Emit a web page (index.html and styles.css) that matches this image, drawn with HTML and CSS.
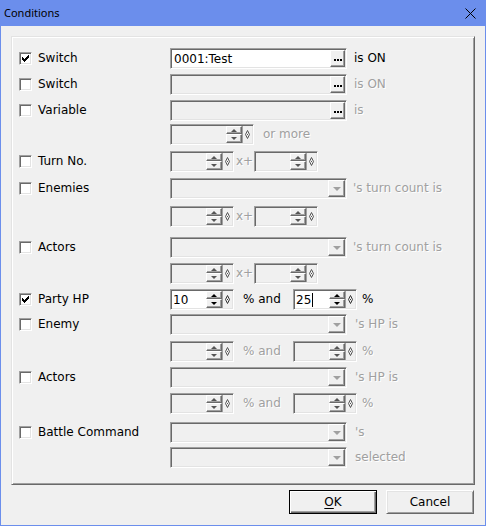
FILE: index.html
```html
<!DOCTYPE html>
<html>
<head>
<meta charset="utf-8">
<title>Conditions</title>
<link rel="stylesheet" href="styles.css">
</head>
<body>
<div class="window">
  <div class="titlebar">
    <span class="title">Conditions</span>
    <svg class="close" width="11" height="11" viewBox="0 0 11 11"><path d="M0.5 0.5 L10.5 10.5 M10.5 0.5 L0.5 10.5" stroke="#000" stroke-width="1" fill="none"/></svg>
  </div>
  <div class="client">
    <div class="group">

      <div class="row">
        <div class="cond"><span class="check"><svg width="7" height="7" viewBox="0 0 7 7"><path d="M6 0h1v1h-1z M5 1h2v1h-2z M0 2h1v1h-1z M4 2h3v1h-3z M0 3h2v1h-2z M3 3h3v1h-3z M0 4h5v1h-5z M1 5h3v1h-3z M2 6h1v1h-1z" fill="#000"/></svg></span><span class="lbl">Switch</span></div>
        <div class="ctrls">
          <div class="field on"><span class="value">0001:Test</span><span class="dots"><svg width="8" height="2" viewBox="0 0 8 2"><path d="M0 0h2v2h-2z M3 0h2v2h-2z M6 0h2v2h-2z" fill="#000"/></svg></span></div>
          <span class="txt">is ON</span>
        </div>
      </div>

      <div class="row mt5">
        <div class="cond"><span class="check"></span><span class="lbl">Switch</span></div>
        <div class="ctrls">
          <div class="field"><span class="value"></span><span class="dots"><svg width="8" height="2" viewBox="0 0 8 2"><path d="M0 0h2v2h-2z M3 0h2v2h-2z M6 0h2v2h-2z" fill="#000"/></svg></span></div>
          <span class="txt dis">is ON</span>
        </div>
      </div>

      <div class="row mt5">
        <div class="cond"><span class="check"></span><span class="lbl">Variable</span></div>
        <div class="ctrls">
          <div class="field"><span class="value"></span><span class="dots"><svg width="8" height="2" viewBox="0 0 8 2"><path d="M0 0h2v2h-2z M3 0h2v2h-2z M6 0h2v2h-2z" fill="#000"/></svg></span></div>
          <span class="txt dis">is</span>
        </div>
      </div>

      <div class="row mt3">
        <div class="cond"></div>
        <div class="ctrls">
          <div class="spin wide"><span class="value"></span><span class="ud"><span class="up"><i class="tri-up"></i></span><span class="dn"><i class="tri-dn"></i></span></span><span class="dia"><svg width="5" height="9" viewBox="0 0 5 9"><path d="M2.5 0.5 L4.5 4.5 L2.5 8.5 L0.5 4.5 Z" fill="none" stroke="#555" stroke-width="1"/><path d="M2 4h1v1h-1z" fill="#555"/></svg></span></div>
          <span class="txt dis more">or more</span>
        </div>
      </div>

      <div class="row mt6">
        <div class="cond"><span class="check"></span><span class="lbl">Turn No.</span></div>
        <div class="ctrls">
          <div class="spin"><span class="value"></span><span class="ud"><span class="up"><i class="tri-up"></i></span><span class="dn"><i class="tri-dn"></i></span></span><span class="dia"><svg width="5" height="9" viewBox="0 0 5 9"><path d="M2.5 0.5 L4.5 4.5 L2.5 8.5 L0.5 4.5 Z" fill="none" stroke="#555" stroke-width="1"/><path d="M2 4h1v1h-1z" fill="#555"/></svg></span></div>
          <span class="txt dis xplus">x+</span>
          <div class="spin"><span class="value"></span><span class="ud"><span class="up"><i class="tri-up"></i></span><span class="dn"><i class="tri-dn"></i></span></span><span class="dia"><svg width="5" height="9" viewBox="0 0 5 9"><path d="M2.5 0.5 L4.5 4.5 L2.5 8.5 L0.5 4.5 Z" fill="none" stroke="#555" stroke-width="1"/><path d="M2 4h1v1h-1z" fill="#555"/></svg></span></div>
        </div>
      </div>

      <div class="row mt6">
        <div class="cond"><span class="check"></span><span class="lbl">Enemies</span></div>
        <div class="ctrls">
          <div class="combo"><span class="value"></span><span class="drop"><i class="tri-dn"></i></span></div>
          <span class="txt dis turn">&#39;s turn count is</span>
        </div>
      </div>

      <div class="row mt7">
        <div class="cond"></div>
        <div class="ctrls">
          <div class="spin"><span class="value"></span><span class="ud"><span class="up"><i class="tri-up"></i></span><span class="dn"><i class="tri-dn"></i></span></span><span class="dia"><svg width="5" height="9" viewBox="0 0 5 9"><path d="M2.5 0.5 L4.5 4.5 L2.5 8.5 L0.5 4.5 Z" fill="none" stroke="#555" stroke-width="1"/><path d="M2 4h1v1h-1z" fill="#555"/></svg></span></div>
          <span class="txt dis xplus">x+</span>
          <div class="spin"><span class="value"></span><span class="ud"><span class="up"><i class="tri-up"></i></span><span class="dn"><i class="tri-dn"></i></span></span><span class="dia"><svg width="5" height="9" viewBox="0 0 5 9"><path d="M2.5 0.5 L4.5 4.5 L2.5 8.5 L0.5 4.5 Z" fill="none" stroke="#555" stroke-width="1"/><path d="M2 4h1v1h-1z" fill="#555"/></svg></span></div>
        </div>
      </div>

      <div class="row mt10">
        <div class="cond"><span class="check"></span><span class="lbl">Actors</span></div>
        <div class="ctrls">
          <div class="combo"><span class="value"></span><span class="drop"><i class="tri-dn"></i></span></div>
          <span class="txt dis turn">&#39;s turn count is</span>
        </div>
      </div>

      <div class="row mt5">
        <div class="cond"></div>
        <div class="ctrls">
          <div class="spin"><span class="value"></span><span class="ud"><span class="up"><i class="tri-up"></i></span><span class="dn"><i class="tri-dn"></i></span></span><span class="dia"><svg width="5" height="9" viewBox="0 0 5 9"><path d="M2.5 0.5 L4.5 4.5 L2.5 8.5 L0.5 4.5 Z" fill="none" stroke="#555" stroke-width="1"/><path d="M2 4h1v1h-1z" fill="#555"/></svg></span></div>
          <span class="txt dis xplus">x+</span>
          <div class="spin"><span class="value"></span><span class="ud"><span class="up"><i class="tri-up"></i></span><span class="dn"><i class="tri-dn"></i></span></span><span class="dia"><svg width="5" height="9" viewBox="0 0 5 9"><path d="M2.5 0.5 L4.5 4.5 L2.5 8.5 L0.5 4.5 Z" fill="none" stroke="#555" stroke-width="1"/><path d="M2 4h1v1h-1z" fill="#555"/></svg></span></div>
        </div>
      </div>

      <div class="row mt5">
        <div class="cond"><span class="check"><svg width="7" height="7" viewBox="0 0 7 7"><path d="M6 0h1v1h-1z M5 1h2v1h-2z M0 2h1v1h-1z M4 2h3v1h-3z M0 3h2v1h-2z M3 3h3v1h-3z M0 4h5v1h-5z M1 5h3v1h-3z M2 6h1v1h-1z" fill="#000"/></svg></span><span class="lbl">Party HP</span></div>
        <div class="ctrls">
          <div class="spin on"><span class="value">10</span><span class="ud"><span class="up"><i class="tri-up"></i></span><span class="dn"><i class="tri-dn"></i></span></span><span class="dia"><svg width="5" height="9" viewBox="0 0 5 9"><path d="M2.5 0.5 L4.5 4.5 L2.5 8.5 L0.5 4.5 Z" fill="none" stroke="#333" stroke-width="1"/><path d="M2 4h1v1h-1z" fill="#333"/></svg></span></div>
          <span class="txt and">% and</span>
          <div class="spin on"><span class="value">25<span class="caret"></span></span><span class="ud"><span class="up"><i class="tri-up"></i></span><span class="dn"><i class="tri-dn"></i></span></span><span class="dia"><svg width="5" height="9" viewBox="0 0 5 9"><path d="M2.5 0.5 L4.5 4.5 L2.5 8.5 L0.5 4.5 Z" fill="none" stroke="#333" stroke-width="1"/><path d="M2 4h1v1h-1z" fill="#333"/></svg></span></div>
          <span class="txt pct">%</span>
        </div>
      </div>

      <div class="row mt4">
        <div class="cond"><span class="check"></span><span class="lbl">Enemy</span></div>
        <div class="ctrls">
          <div class="combo"><span class="value"></span><span class="drop"><i class="tri-dn"></i></span></div>
          <span class="txt dis hp">&#39;s HP is</span>
        </div>
      </div>

      <div class="row mt6">
        <div class="cond"></div>
        <div class="ctrls">
          <div class="spin"><span class="value"></span><span class="ud"><span class="up"><i class="tri-up"></i></span><span class="dn"><i class="tri-dn"></i></span></span><span class="dia"><svg width="5" height="9" viewBox="0 0 5 9"><path d="M2.5 0.5 L4.5 4.5 L2.5 8.5 L0.5 4.5 Z" fill="none" stroke="#555" stroke-width="1"/><path d="M2 4h1v1h-1z" fill="#555"/></svg></span></div>
          <span class="txt dis and">% and</span>
          <div class="spin"><span class="value"></span><span class="ud"><span class="up"><i class="tri-up"></i></span><span class="dn"><i class="tri-dn"></i></span></span><span class="dia"><svg width="5" height="9" viewBox="0 0 5 9"><path d="M2.5 0.5 L4.5 4.5 L2.5 8.5 L0.5 4.5 Z" fill="none" stroke="#555" stroke-width="1"/><path d="M2 4h1v1h-1z" fill="#555"/></svg></span></div>
          <span class="txt dis pct">%</span>
        </div>
      </div>

      <div class="row mt5">
        <div class="cond"><span class="check"></span><span class="lbl">Actors</span></div>
        <div class="ctrls">
          <div class="combo"><span class="value"></span><span class="drop"><i class="tri-dn"></i></span></div>
          <span class="txt dis hp">&#39;s HP is</span>
        </div>
      </div>

      <div class="row mt5">
        <div class="cond"></div>
        <div class="ctrls">
          <div class="spin"><span class="value"></span><span class="ud"><span class="up"><i class="tri-up"></i></span><span class="dn"><i class="tri-dn"></i></span></span><span class="dia"><svg width="5" height="9" viewBox="0 0 5 9"><path d="M2.5 0.5 L4.5 4.5 L2.5 8.5 L0.5 4.5 Z" fill="none" stroke="#555" stroke-width="1"/><path d="M2 4h1v1h-1z" fill="#555"/></svg></span></div>
          <span class="txt dis and">% and</span>
          <div class="spin"><span class="value"></span><span class="ud"><span class="up"><i class="tri-up"></i></span><span class="dn"><i class="tri-dn"></i></span></span><span class="dia"><svg width="5" height="9" viewBox="0 0 5 9"><path d="M2.5 0.5 L4.5 4.5 L2.5 8.5 L0.5 4.5 Z" fill="none" stroke="#555" stroke-width="1"/><path d="M2 4h1v1h-1z" fill="#555"/></svg></span></div>
          <span class="txt dis pct">%</span>
        </div>
      </div>

      <div class="row mt8">
        <div class="cond"><span class="check"></span><span class="lbl">Battle Command</span></div>
        <div class="ctrls">
          <div class="combo"><span class="value"></span><span class="drop"><i class="tri-dn"></i></span></div>
          <span class="txt dis hp">&#39;s</span>
        </div>
      </div>

      <div class="row mt4">
        <div class="cond"></div>
        <div class="ctrls">
          <div class="combo"><span class="value"></span><span class="drop"><i class="tri-dn"></i></span></div>
          <span class="txt dis hp">selected</span>
        </div>
      </div>

    </div>
    <div class="footer">
      <div class="btn default"><span><u>O</u>K</span></div>
      <div class="btn">Cancel</div>
    </div>
  </div>
</div>
</body>
</html>
```

FILE: styles.css
```css
* { box-sizing: border-box; }
html, body { margin: 0; padding: 0; background: #f0f0f0; }
body {
  font-family: "DejaVu Sans", Verdana, sans-serif;
  font-size: 12px;
  color: #000;
}

.window {
  width: 486px;
  height: 526px;
  border: 1px solid #6b8eec;
  border-top: 0;
  background: #f0f0f0;
  display: flex;
  flex-direction: column;
}

.titlebar {
  height: 26px;
  flex: none;
  background: #6b8eec;
  display: flex;
  align-items: center;
  justify-content: space-between;
  padding: 0 9px 0 3px;
}
.title {
  font-family: "Noto Sans", sans-serif;
  font-size: 11px;
  line-height: 26px;
  color: #000;
}
.close { display: block; }

.client {
  flex: 1;
  padding: 10px 10px 0 10px;
  display: flex;
  flex-direction: column;
}

.group {
  height: 449px;
  border: 1px solid;
  border-color: #e3e3e3 #696969 #696969 #e3e3e3;
  box-shadow: inset 1px 1px 0 #fff, inset -1px -1px 0 #a0a0a0;
  padding: 11px 0 0 7px;
}

.row {
  display: grid;
  grid-template-columns: 151px auto;
  height: 21px;
}
.mt3 { margin-top: 3px; }
.mt4 { margin-top: 4px; }
.mt5 { margin-top: 5px; }
.mt6 { margin-top: 6px; }
.mt7 { margin-top: 7px; }
.mt8 { margin-top: 8px; }
.mt10 { margin-top: 10px; }

.cond {
  display: flex;
  align-items: flex-start;
}
.check {
  width: 13px;
  height: 13px;
  margin-top: 4px;
  flex: none;
  background: #fff;
  border: 1px solid;
  border-color: #a0a0a0 #fff #fff #a0a0a0;
  box-shadow: inset 1px 1px 0 #696969, inset -1px -1px 0 #e3e3e3;
  padding: 2px;
  display: flex;
}
.check svg { display: block; }
.lbl {
  margin-left: 6px;
  line-height: 20px;
  white-space: nowrap;
}

.ctrls {
  display: flex;
  align-items: flex-start;
}

.txt {
  line-height: 21px;
  white-space: nowrap;
  margin-left: 7px;
}
.txt.dis {
  color: #a0a0a0;
  text-shadow: 1px 1px 0 #fff;
}
.txt.more { margin-left: 9px; }
.txt.turn { margin-left: 6px; }
.txt.hp { margin-left: 8px; }
.txt.xplus { margin-left: 0; width: 20px; padding-left: 2px; }
.txt.and { margin-left: 0; width: 59px; padding-left: 9px; }
.txt.pct { margin-left: 5px; }

/* sunken controls */
.field, .combo, .spin {
  height: 21px;
  border: 1px solid;
  border-color: #a0a0a0 #fff #fff #a0a0a0;
  box-shadow: inset 1px 1px 0 #696969, inset -1px -1px 0 #e3e3e3;
  padding: 1px;
  display: flex;
  background: #f0f0f0;
  flex: none;
}
.field, .combo { width: 177px; }
.field.on, .spin.on { background: #fff; }

.value {
  flex: 1;
  line-height: 17px;
  padding-left: 2px;
  padding-top: 1px;
  white-space: nowrap;
  display: flex;
  align-items: center;
}
.spin .value { padding-left: 1px; }

.dots, .drop, .up, .dn {
  background: #f0f0f0;
  border: 1px solid;
  border-color: #fff #696969 #696969 #fff;
  box-shadow: inset -1px -1px 0 #a0a0a0;
  display: flex;
  align-items: center;
  justify-content: center;
}
.dots {
  width: 15px;
  height: 17px;
  padding-top: 2px;
}
.drop {
  width: 17px;
  height: 17px;
}

.spin { width: 64px; }
.spin.wide { width: 84px; }
.ud {
  width: 16px;
  height: 17px;
  display: flex;
  flex-direction: column;
  flex: none;
}
.up { height: 8px; }
.dn { flex: 1; }
.dia {
  width: 10px;
  height: 17px;
  flex: none;
  border-left: 1px solid #a0a0a0;
  display: flex;
  align-items: center;
  justify-content: center;
  background: #f0f0f0;
}
.dia svg { display: block; }

.tri-up {
  width: 0;
  height: 0;
  border-left: 3px solid transparent;
  border-right: 3px solid transparent;
  border-bottom: 3px solid #555;
}
.tri-dn {
  width: 0;
  height: 0;
  border-left: 3px solid transparent;
  border-right: 3px solid transparent;
  border-top: 3px solid #555;
}
.spin.on .tri-up { border-bottom-color: #000; }
.spin.on .tri-dn { border-top-color: #000; }
.drop .tri-dn {
  border-left-width: 4px;
  border-right-width: 4px;
  border-top: 4px solid #a0a0a0;
  margin-top: 1px;
}

.caret {
  display: inline-block;
  width: 1px;
  height: 14px;
  background: #000;
  margin-left: 1px;
}

.footer {
  display: flex;
  justify-content: flex-end;
  gap: 9px;
  margin-top: 5px;
  padding-right: 1px;
}
.btn {
  width: 88px;
  height: 24px;
  border: 1px solid;
  border-color: #fff #696969 #696969 #fff;
  box-shadow: inset 1px 1px 0 #e3e3e3, inset -1px -1px 0 #a0a0a0;
  display: flex;
  align-items: center;
  justify-content: center;
  line-height: 14px;
  background: #f0f0f0;
}
.btn.default {
  border-color: #000;
  box-shadow: inset 1px 1px 0 #fff, inset -1px -1px 0 #696969, inset -2px -2px 0 #a0a0a0;
}
.btn u { text-decoration: underline; text-underline-offset: 2px; }
```
